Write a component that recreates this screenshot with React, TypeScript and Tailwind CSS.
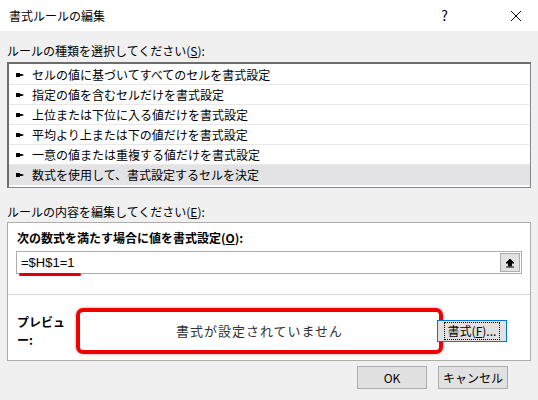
const rows = [
  "セルの値に基づいてすべてのセルを書式設定",
  "指定の値を含むセルだけを書式設定",
  "上位または下位に入る値だけを書式設定",
  "平均より上または下の値だけを書式設定",
  "一意の値または重複する値だけを書式設定",
  "数式を使用して、書式設定するセルを決定",
];

const font = { fontFamily: '"Noto Sans CJK JP", "Liberation Sans", sans-serif' };

export default function App() {
  return (
    <div className="w-[538px] h-[400px] bg-[#f0f0f0] text-[12px] text-black overflow-hidden flex flex-col" style={font}>
      {/* title bar */}
      <div className="h-[31px] bg-white flex items-center pl-[9px] shrink-0">
        <span className="text-[12px]">書式ルールの編集</span>
        <span className="ml-auto mr-[62px] text-[14px]">?</span>
        <svg width="12" height="12" viewBox="0 0 12 12" className="mr-[16px]">
          <path d="M1 1L11 11M11 1L1 11" stroke="#000" strokeWidth="1" />
        </svg>
      </div>

      <div className="px-[7px] flex flex-col">
        <div className="h-[20px] mt-[10px] leading-[20px]">
          ルールの種類を選択してください(<u>S</u>):
        </div>
        <div className="h-[126px] mt-[1px] bg-white border border-[#828790] border-l-2 border-t-2 border-l-[#6d6d6d] border-t-[#6d6d6d] pt-[1px] flex flex-col">
          {rows.map((r, i) => (
            <div
              key={r}
              className={`h-[20px] flex items-center pl-[6px] ${i === 5 ? "bg-[#e3e3e6]" : "border-b border-[#e8e8e8]"}`}
            >
              <svg width="12" height="8" viewBox="0 0 12 8" className="mr-[5px]">
                <path d="M1 2H5V6H1Z M5 3H9L7 4L9 5H5Z" fill="#000" />
              </svg>
              {r}
            </div>
          ))}
        </div>

        <div className="h-[20px] mt-[14px] leading-[20px]">
          ルールの内容を編集してください(<u>E</u>):
        </div>
        <div className="h-[139px] mt-0 bg-white border border-[#adadad] flex flex-col">
          <div className="font-bold mt-[6px] ml-[9px] h-[18px] leading-[18px]">
            次の数式を満たす場合に値を書式設定(<u>O</u>):
          </div>
          <div className="relative mx-[8px] mt-[4px] h-[23px] border border-[#adadad] flex items-center">
            <span className="pl-[4px] text-[13px]" style={{ fontFamily: '"Liberation Sans", sans-serif' }}>=$H$1=1</span>
            <div className="ml-auto mr-[1px] w-[20px] h-[19px] bg-[#e1e1e1] border border-[#adadad] flex items-center justify-center">
              <svg width="10" height="10" viewBox="0 0 10 10">
                <path d="M5 1L9 5H6.5V8H3.5V5H1Z M1 9H9" stroke="#000" fill="#000" strokeWidth="1" />
              </svg>
            </div>
            <div className="absolute left-[2px] top-[21px] w-[62px] h-[3px] bg-[#e10000] rounded-full" />
          </div>
          <div className="mt-[20px] h-px bg-[#d4d4d4]" />
          <div className="flex items-center mt-[13px] ml-[9px]">
            <span className="font-bold w-[59px]">プレビュー:</span>
            <div className="w-[367px] h-[46px] border-[4px] border-[#f00000] rounded-[7px] flex items-center justify-center text-[13px] text-[#333] tracking-[1px] shadow-[0_0_3px_rgba(0,0,0,0.4)]">
              書式が設定されていません
            </div>
            <div className="ml-[-6px] w-[70px] h-[22px] border border-[#0078d7] bg-[#e1e1e1] flex items-center justify-center">
              <span className="border border-dotted border-black px-[3px] leading-[16px]">書式(<u>F</u>)...</span>
            </div>
          </div>
        </div>

        <div className="flex justify-end gap-[11px] mt-[5px] mr-[23px]">
          <div className="w-[70px] h-[23px] border border-[#adadad] bg-[#e1e1e1] flex items-center justify-center">OK</div>
          <div className="w-[70px] h-[23px] border border-[#adadad] bg-[#e1e1e1] flex items-center justify-center">キャンセル</div>
        </div>
      </div>
    </div>
  );
}
